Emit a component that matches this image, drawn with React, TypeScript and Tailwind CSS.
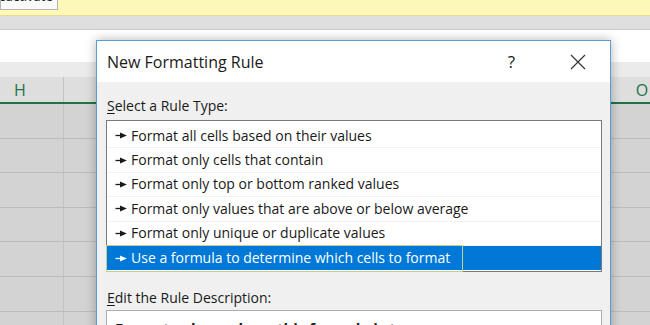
import React from "react";

const RULE_TYPES = [
  "Format all cells based on their values",
  "Format only cells that contain",
  "Format only top or bottom ranked values",
  "Format only values that are above or below average",
  "Format only unique or duplicate values",
  "Use a formula to determine which cells to format",
];

const COLUMNS = ["H", "I", "J", "K", "L", "M", "N", "O"];

const RuleArrow = ({ color }: { color: string }) => (
  <svg width="12" height="7" viewBox="0 0 12 7" className="shrink-0">
    <line x1="0.5" y1="3.5" x2="7" y2="3.5" stroke={color} strokeWidth="1.3" />
    <polygon points="5,0.5 11.8,3.5 5,6.5" fill={color} />
  </svg>
);

const SheetRow = ({ header }: { header?: boolean }) => (
  <div
    className={
      header
        ? "flex h-[27px] bg-[#dedede] border-b-2 border-[#217346]"
        : "flex h-[34.6px] bg-[#d3d3d3] border-b border-[#bcbcbc]"
    }
  >
    {COLUMNS.map((col, i) => (
      <div
        key={col}
        className={
          (i === 0 ? "w-[64px] justify-start pl-[14px]" : "w-[89px] justify-center") +
          " shrink-0 border-r border-[#c2c2c2] flex items-center"
        }
      >
        {header && (
          <span className="text-[16px] text-[#217346] leading-none">
            {col}
          </span>
        )}
      </div>
    ))}
  </div>
);

const NewFormattingRuleDialog = () => (
  <div className="absolute left-[96px] top-[40px] w-[515px] h-[300px] border border-[#5b9bd5] bg-[#f0f0f0] shadow-[0_0_10px_rgba(0,0,0,0.3)]">
    <div className="h-[41px] bg-white flex items-center pl-[10px] text-[16px] text-[#1a1a1a]">
      <span>New Formatting Rule</span>
      <span className="ml-auto text-[17px] mr-[55px] leading-none">?</span>
      <svg width="16" height="16" viewBox="0 0 16 16" className="mr-[24px]">
        <path d="M1 1 L15 15 M15 1 L1 15" stroke="#333" strokeWidth="1.2" />
      </svg>
    </div>
    <div className="pt-[14px] text-[14px] text-[#1a1a1a]">
      <div className="pl-[10px] leading-[20px]">
        <span className="underline underline-offset-2">S</span>elect a Rule
        Type:
      </div>
      <div className="ml-[9px] mr-[8px] mt-[4px] h-[152px] border border-[#7a7a7a] bg-white pt-[3px]">
        {RULE_TYPES.map((rule, i) => {
          const selected = i === RULE_TYPES.length - 1;
          return (
            <div
              key={rule}
              className={
                selected
                  ? "relative h-[24.4px] flex items-center gap-[4px] pl-[8px] bg-[#0078d7] text-white"
                  : "h-[24.4px] flex items-center gap-[4px] pl-[8px] border-b border-[#f2f2f2]"
              }
            >
              <RuleArrow color={selected ? "#ffffff" : "#1a1a1a"} />
              <span className="leading-none">{rule}</span>
              {selected && (
                <div className="absolute left-[-1px] top-[-1px] w-[357px] h-[27px] border border-[#c3cf8c]" />
              )}
            </div>
          );
        })}
      </div>
      <div className="pl-[10px] mt-[16px] leading-[20px]">
        <span className="underline underline-offset-2">E</span>dit the Rule
        Description:
      </div>
      <div className="ml-[9px] mr-[8px] mt-[2px] h-[60px] border border-[#adadad] bg-white pt-[7px] pl-[8px]">
        <div className="font-bold text-[15px] leading-[20px]">
          Format values where this formula is true:
        </div>
      </div>
    </div>
  </div>
);

export default function App() {
  return (
    <div
      className="relative w-[650px] h-[325px] overflow-hidden bg-[#d3d3d3]"
      style={{ fontFamily: '"Open Sans", "Noto Sans", sans-serif' }}
    >
      <div className="h-[16px] bg-[#fdf7b8] border-b border-[#e6db8e]">
        <div className="w-[58px] h-[10px] bg-[#fafafa] border border-t-0 border-[#b4b4b4] overflow-hidden">
          <div className="-mt-[13px] -ml-[12px] text-[13px] leading-[18px] text-[#222]">
            Deactivate
          </div>
        </div>
      </div>
      <div className="h-[14px] bg-[#dfdfdf] border-b border-[#c9c9c9]" />
      <div className="h-[32px] bg-white" />
      <div className="h-[15px] bg-[#ebebeb]" />
      <SheetRow header />
      {[0, 1, 2, 3, 4, 5, 6].map((r) => (
        <SheetRow key={r} />
      ))}
      <NewFormattingRuleDialog />
    </div>
  );
}
